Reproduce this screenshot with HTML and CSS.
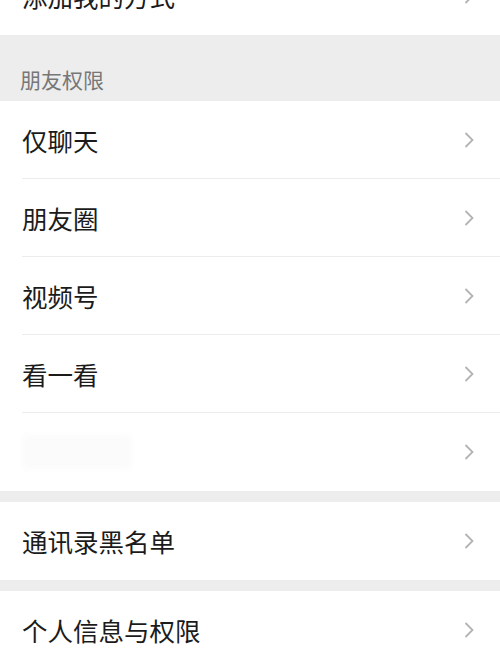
FILE: index.html
```html
<!DOCTYPE html>
<html lang="zh">
<head>
<meta charset="utf-8">
<link rel="stylesheet" href="styles.css">
</head>
<body>
<div class="page">
  <div class="group">
    <div class="row"><div class="row-inner last"><span class="title">添加我的方式</span><span class="chev"><svg viewBox="0 0 10 16" width="10" height="16"><path d="M1.5 1 L8.5 8 L1.5 15" fill="none" stroke="#b3b3b3" stroke-width="1.8"/></svg></span></div></div>
  </div>
  <div class="label">朋友权限</div>
  <div class="group">
    <div class="row"><div class="row-inner"><span class="title">仅聊天</span><span class="chev"><svg viewBox="0 0 10 16" width="10" height="16"><path d="M1.5 1 L8.5 8 L1.5 15" fill="none" stroke="#b3b3b3" stroke-width="1.8"/></svg></span></div></div>
    <div class="row"><div class="row-inner"><span class="title">朋友圈</span><span class="chev"><svg viewBox="0 0 10 16" width="10" height="16"><path d="M1.5 1 L8.5 8 L1.5 15" fill="none" stroke="#b3b3b3" stroke-width="1.8"/></svg></span></div></div>
    <div class="row"><div class="row-inner"><span class="title">视频号</span><span class="chev"><svg viewBox="0 0 10 16" width="10" height="16"><path d="M1.5 1 L8.5 8 L1.5 15" fill="none" stroke="#b3b3b3" stroke-width="1.8"/></svg></span></div></div>
    <div class="row"><div class="row-inner"><span class="title">看一看</span><span class="chev"><svg viewBox="0 0 10 16" width="10" height="16"><path d="M1.5 1 L8.5 8 L1.5 15" fill="none" stroke="#b3b3b3" stroke-width="1.8"/></svg></span></div></div>
    <div class="row"><div class="row-inner last"><span class="blurred"></span><span class="chev"><svg viewBox="0 0 10 16" width="10" height="16"><path d="M1.5 1 L8.5 8 L1.5 15" fill="none" stroke="#b3b3b3" stroke-width="1.8"/></svg></span></div></div>
  </div>
  <div class="gap"></div>
  <div class="group">
    <div class="row"><div class="row-inner last"><span class="title">通讯录黑名单</span><span class="chev"><svg viewBox="0 0 10 16" width="10" height="16"><path d="M1.5 1 L8.5 8 L1.5 15" fill="none" stroke="#b3b3b3" stroke-width="1.8"/></svg></span></div></div>
  </div>
  <div class="gap"></div>
  <div class="group">
    <div class="row"><div class="row-inner last"><span class="title">个人信息与权限</span><span class="chev"><svg viewBox="0 0 10 16" width="10" height="16"><path d="M1.5 1 L8.5 8 L1.5 15" fill="none" stroke="#b3b3b3" stroke-width="1.8"/></svg></span></div></div>
  </div>
</div>
</body>
</html>
```
FILE: styles.css
```css
html, body {
  margin: 0;
  padding: 0;
  background: #ededed;
  font-family: "Noto Sans CJK SC", "Noto Sans", sans-serif;
  overflow: hidden;
}
.page {
  width: 500px;
  margin-top: -43px;
}
.group {
  background: #ffffff;
}
.row {
  padding-left: 22px;
}
.row-inner {
  height: 78px;
  box-sizing: border-box;
  display: flex;
  align-items: center;
  justify-content: space-between;
  padding-right: 26px;
  border-bottom: 1px solid #ececec;
}
.row-inner.last {
  border-bottom: none;
}
.title {
  font-size: 25.5px;
  color: #1b1b1b;
  line-height: 30px;
}
.chev {
  display: flex;
  width: 10px;
  height: 16px;
}
.blurred {
  display: block;
  width: 110px;
  height: 34px;
  background: #fbfbfb;
  filter: blur(3px);
}
.label {
  height: 66px;
  box-sizing: border-box;
  padding: 32px 0 0 20px;
  font-size: 21px;
  line-height: 24px;
  color: #777777;
}
.gap {
  height: 11px;
}
```
